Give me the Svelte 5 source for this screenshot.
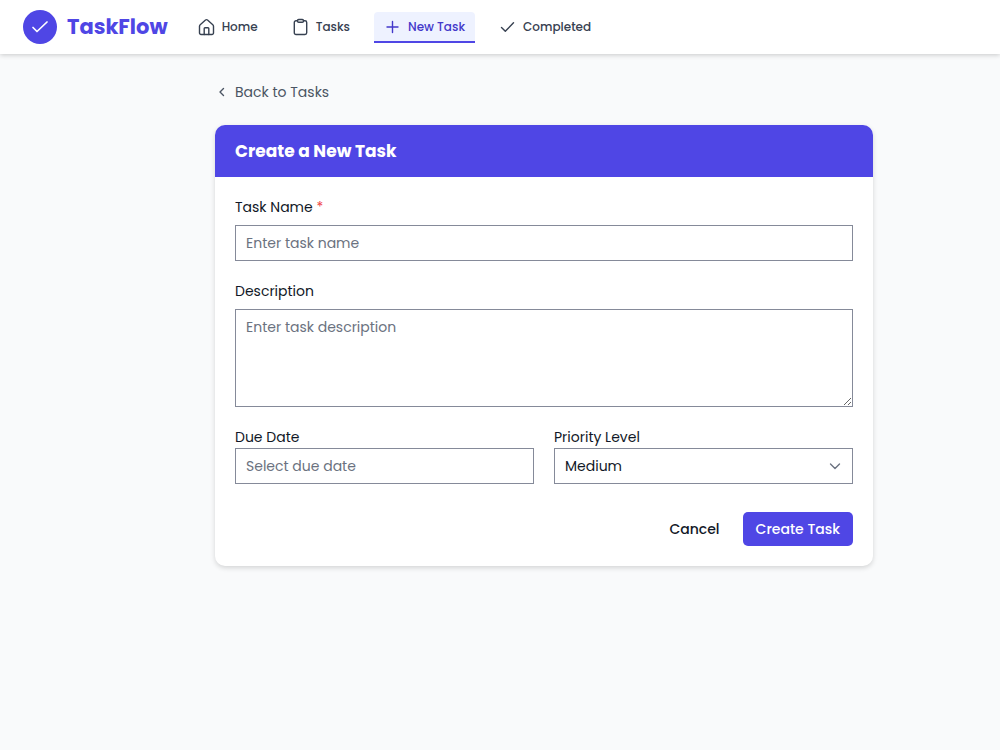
<script lang="ts">
  interface NavItem {
    label: string;
    href: string;
    icon: 'home' | 'clipboard' | 'plus' | 'check';
    active?: boolean;
  }

  const navItems: NavItem[] = [
    { label: 'Home', href: '#home', icon: 'home' },
    { label: 'Tasks', href: '#tasks', icon: 'clipboard' },
    { label: 'New Task', href: '#new', icon: 'plus', active: true },
    { label: 'Completed', href: '#completed', icon: 'check' },
  ];

  const priorities = ['Low', 'Medium', 'High'];

  let name = $state('');
  let description = $state('');
  let dueDate = $state('');
  let priority = $state('Medium');

  function reset() {
    name = '';
    description = '';
    dueDate = '';
    priority = 'Medium';
  }

  function submit(event: SubmitEvent) {
    event.preventDefault();
    reset();
  }
</script>

<header class="topbar">
  <a class="brand" href="#home">
    <span class="brand__mark">
      <svg viewBox="0 0 20 20" width="20" height="20" aria-hidden="true">
        <path d="M3 10.500l4 4L17 5" />
      </svg>
    </span>
    <span>TaskFlow</span>
  </a>
  <nav class="nav">
    {#each navItems as item (item.label)}
      <a
        class="nav__link"
        class:nav__link--active={item.active}
        href={item.href}
        aria-current={item.active ? 'page' : undefined}
      >
        <svg viewBox="0 0 18 18" width="18" height="18" aria-hidden="true">
          {#if item.icon === 'home'}
            <path d="M1.500 8.200a2 2 0 0 1 .7-1.500L7.500 2a1.600 1.600 0 0 1 2 0l5.300 4.700a2 2 0 0 1 .7 1.500V15a1.500 1.500 0 0 1-1.500 1.500H3A1.500 1.500 0 0 1 1.500 15z" />
            <path d="M6.200 16.500v-6a.8.8 0 0 1 .8-.8h3a.8.8 0 0 1 .8.8v6" />
          {:else if item.icon === 'clipboard'}
            <path d="M5.500 2.800H4A1.700 1.700 0 0 0 2.300 4.500v10.300A1.700 1.700 0 0 0 4 16.500h9a1.700 1.700 0 0 0 1.700-1.700V4.500A1.700 1.700 0 0 0 13 2.800h-1.500" />
            <rect x="5.500" y="1.500" width="6" height="2.800" rx="1.200" />
          {:else if item.icon === 'plus'}
            <path d="M8.500 3.500v11M3 9h11" />
          {:else}
            <path d="M2.500 9.500L6.300 13.300 14.500 4.800" />
          {/if}
        </svg>
        {item.label}
      </a>
    {/each}
  </nav>
</header>

<main class="page">
  <a class="back" href="#tasks">
    <svg viewBox="0 0 14 14" width="14" height="14" aria-hidden="true">
      <path d="M8.500 3.500L5 7l3.500 3.500" />
    </svg>
    Back to Tasks
  </a>

  <section class="card">
    <h1 class="card__title">Create a New Task</h1>

    <form class="form" onsubmit={submit}>
      <div class="field">
        <label for="task-name">Task Name <span class="required">*</span></label>
        <input id="task-name" type="text" placeholder="Enter task name" bind:value={name} />
      </div>

      <div class="field">
        <label for="task-description">Description</label>
        <textarea
          id="task-description"
          placeholder="Enter task description"
          bind:value={description}
        ></textarea>
      </div>

      <div class="row">
        <div class="field field--tight">
          <label for="due-date">Due Date</label>
          <input id="due-date" type="text" placeholder="Select due date" bind:value={dueDate} />
        </div>
        <div class="field field--tight">
          <label for="priority">Priority Level</label>
          <div class="select">
            <select id="priority" bind:value={priority}>
              {#each priorities as option}
                <option value={option}>{option}</option>
              {/each}
            </select>
            <svg viewBox="0 0 14 14" width="14" height="14" aria-hidden="true">
              <path d="M2.500 5L7 9.500 11.500 5" />
            </svg>
          </div>
        </div>
      </div>

      <div class="actions">
        <button type="button" class="btn" onclick={reset}>Cancel</button>
        <button type="submit" class="btn btn--primary">Create Task</button>
      </div>
    </form>
  </section>
</main>

<style>
  :global(body) {
    margin: 0;
    background: #f9fafb;
    color: #111827;
    font-family: Poppins, Inter, sans-serif;
    font-size: 14px;
    line-height: 20px;
  }

  svg {
    flex: none;
    fill: none;
    stroke: currentColor;
    stroke-width: 1.4;
    stroke-linecap: round;
    stroke-linejoin: round;
  }

  a {
    color: inherit;
    text-decoration: none;
  }

  .topbar {
    display: flex;
    align-items: center;
    gap: 20px;
    height: 54px;
    padding: 0 23px;
    background: #fff;
    box-shadow: 0 1px 5px rgba(0, 0, 0, 0.2);
  }

  .brand {
    display: flex;
    align-items: center;
    gap: 10px;
    color: #4f46e5;
    font-size: 21px;
    font-weight: 700;
  }

  .brand__mark {
    display: grid;
    place-items: center;
    width: 34px;
    height: 34px;
    border-radius: 50%;
    background: #4f46e5;
    color: #fff;
  }

  .brand__mark svg {
    stroke-width: 1.7;
  }

  .nav {
    display: flex;
    gap: 14px;
  }

  .nav__link {
    display: flex;
    align-items: center;
    gap: 6px;
    box-sizing: border-box;
    height: 31px;
    padding: 1px 10px 0;
    border-bottom: 2px solid transparent;
    border-radius: 4px 4px 0 0;
    color: #374151;
    font-size: 12px;
    font-weight: 500;
  }

  .nav__link--active {
    border-bottom-color: #4f46e5;
    background: #eef2ff;
    color: #4338ca;
  }

  .page {
    padding: 28px 127px 28px 215px;
  }

  .back {
    display: flex;
    align-items: center;
    gap: 6px;
    width: fit-content;
    color: #4b5563;
  }

  .card {
    margin-top: 23px;
    border-radius: 10px;
    overflow: hidden;
    background: #fff;
    box-shadow: 0 2px 5px rgba(0, 0, 0, 0.15);
  }

  .card__title {
    margin: 0;
    padding: 14px 20px;
    background: #4f46e5;
    color: #fff;
    font-size: 17px;
    font-weight: 700;
    line-height: 24px;
  }

  .form {
    display: flex;
    flex-direction: column;
    gap: 20px;
    padding: 20px;
  }

  .field {
    display: flex;
    flex: 1;
    flex-direction: column;
    gap: 8px;
    min-width: 0;
  }

  .field--tight {
    gap: 1px;
  }

  .required {
    color: #ef4444;
  }

  input,
  textarea,
  select {
    box-sizing: border-box;
    width: 100%;
    height: 36px;
    margin: 0;
    padding: 7px 10px;
    border: 1px solid #858a99;
    border-radius: 0;
    background: #fff;
    color: inherit;
    font: inherit;
  }

  textarea {
    display: block;
    height: 98px;
    resize: vertical;
  }

  input::placeholder,
  textarea::placeholder {
    color: #6b7280;
    opacity: 1;
  }

  .row {
    display: flex;
    gap: 20px;
  }

  .select {
    position: relative;
  }

  select {
    display: block;
    appearance: none;
  }

  .select svg {
    position: absolute;
    top: 11px;
    right: 11px;
    color: #6b7280;
    pointer-events: none;
  }

  .actions {
    display: flex;
    justify-content: flex-end;
    gap: 10px;
    padding-top: 8px;
  }

  .btn {
    padding: 7px 13px;
    border: 0;
    border-radius: 5px;
    background: transparent;
    color: inherit;
    font: inherit;
    font-weight: 500;
    cursor: pointer;
  }

  .btn--primary {
    background: #4f46e5;
    color: #fff;
  }
</style>
